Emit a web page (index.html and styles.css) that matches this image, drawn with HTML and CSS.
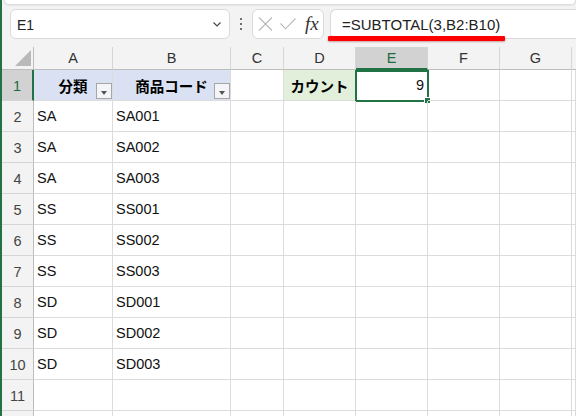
FILE: index.html
```html
<!DOCTYPE html>
<html lang="ja">
<head>
<meta charset="utf-8">
<title>Excel</title>
<link rel="stylesheet" href="styles.css">
</head>
<body>
<div class="app">
  <div class="ribbon"></div>
  <div class="fbar">
    <div class="namebox">
      <span class="ref">E1</span>
      <svg class="chev" width="8" height="5" viewBox="0 0 8 5"><path d="M0.5 0.5 L4 4 L7.5 0.5" fill="none" stroke="#444" stroke-width="1.1"/></svg>
    </div>
    <div class="dots"><i></i><i></i><i></i></div>
    <div class="iconbox">
      <svg width="15" height="14" viewBox="0 0 15 14"><path d="M1 0.5 L14 13.5 M14 0.5 L1 13.5" stroke="#b8b8b8" stroke-width="1.1" fill="none"/></svg>
      <svg width="16" height="12" viewBox="0 0 16 12"><path d="M0.5 5.5 L5.5 10.8 L15.5 0.5" stroke="#b8b8b8" stroke-width="1.1" fill="none"/></svg>
      <span class="fx">fx</span>
    </div>
    <div class="formula">=SUBTOTAL(3,B2:B10)</div>
    <div class="redline"></div>
  </div>
  <div class="sheet">
    <div class="ch corner"><span class="tri"></span></div>
    <div class="ch">A</div>
    <div class="ch">B</div>
    <div class="ch">C</div>
    <div class="ch">D</div>
    <div class="ch sel">E</div>
    <div class="ch">F</div>
    <div class="ch">G</div>
    <div class="ch last"></div>

    <div class="rh rsel">1</div>
    <div class="c blue hd">分類<span class="flt"></span></div>
    <div class="c blue hd">商品コード<span class="flt"></span></div>
    <div class="c"></div>
    <div class="c green hd">カウント</div>
    <div class="c num active">9<span class="selbox"></span><span class="handle"></span></div>
    <div class="c"></div>
    <div class="c"></div>
    <div class="c"></div>

    <div class="rh">2</div><div class="c">SA</div><div class="c">SA001</div><div class="c"></div><div class="c"></div><div class="c"></div><div class="c"></div><div class="c"></div><div class="c"></div>
    <div class="rh">3</div><div class="c">SA</div><div class="c">SA002</div><div class="c"></div><div class="c"></div><div class="c"></div><div class="c"></div><div class="c"></div><div class="c"></div>
    <div class="rh">4</div><div class="c">SA</div><div class="c">SA003</div><div class="c"></div><div class="c"></div><div class="c"></div><div class="c"></div><div class="c"></div><div class="c"></div>
    <div class="rh">5</div><div class="c">SS</div><div class="c">SS001</div><div class="c"></div><div class="c"></div><div class="c"></div><div class="c"></div><div class="c"></div><div class="c"></div>
    <div class="rh">6</div><div class="c">SS</div><div class="c">SS002</div><div class="c"></div><div class="c"></div><div class="c"></div><div class="c"></div><div class="c"></div><div class="c"></div>
    <div class="rh">7</div><div class="c">SS</div><div class="c">SS003</div><div class="c"></div><div class="c"></div><div class="c"></div><div class="c"></div><div class="c"></div><div class="c"></div>
    <div class="rh">8</div><div class="c">SD</div><div class="c">SD001</div><div class="c"></div><div class="c"></div><div class="c"></div><div class="c"></div><div class="c"></div><div class="c"></div>
    <div class="rh">9</div><div class="c">SD</div><div class="c">SD002</div><div class="c"></div><div class="c"></div><div class="c"></div><div class="c"></div><div class="c"></div><div class="c"></div>
    <div class="rh">10</div><div class="c">SD</div><div class="c">SD003</div><div class="c"></div><div class="c"></div><div class="c"></div><div class="c"></div><div class="c"></div><div class="c"></div>
    <div class="rh">11</div><div class="c"></div><div class="c"></div><div class="c"></div><div class="c"></div><div class="c"></div><div class="c"></div><div class="c"></div><div class="c"></div>
    <div class="rh"></div><div class="c"></div><div class="c"></div><div class="c"></div><div class="c"></div><div class="c"></div><div class="c"></div><div class="c"></div><div class="c"></div>
  </div>
</div>
</body>
</html>
```

FILE: styles.css
```css
* { box-sizing: border-box; }
html, body { margin: 0; padding: 0; }
body {
  width: 576px;
  height: 416px;
  overflow: hidden;
  font-family: "Liberation Sans", "Noto Sans CJK JP", sans-serif;
  color: #000;
}
.app {
  width: 576px;
  height: 416px;
  border-left: 2px solid #217346;
  background: #f3f3f3;
  overflow: hidden;
}
.ribbon {
  height: 5px;
  margin-left: 2px;
  background: #fff;
  border: 1px solid #dcdcdc;
  border-top: none;
  border-radius: 0 0 7px 7px;
  box-shadow: 0 1px 2px rgba(0,0,0,0.06);
}
.fbar {
  position: relative;
  display: flex;
  align-items: center;
  height: 30px;
  margin-top: 4px;
  margin-bottom: 8px;
  padding-left: 8px;
}
.namebox {
  width: 220px;
  height: 30px;
  background: #fff;
  border: 1px solid #dadada;
  border-radius: 6px;
  display: flex;
  align-items: center;
  justify-content: space-between;
  padding: 0 8px 0 6px;
  font-size: 14px;
  color: #222;
}
.namebox .ref { padding-top: 1px; }
.dots {
  width: 22px;
  display: flex;
  flex-direction: column;
  align-items: center;
  gap: 2.5px;
}
.dots i {
  display: block;
  width: 2.5px;
  height: 2.5px;
  background: #444;
  border-radius: 50%;
}
.iconbox {
  width: 72px;
  height: 30px;
  background: #fff;
  border: 1px solid #dadada;
  border-radius: 6px;
  display: flex;
  align-items: center;
  padding-left: 5px;
  gap: 7px;
}
.fx {
  font-family: "Liberation Serif", "DejaVu Serif", serif;
  font-style: italic;
  font-size: 19px;
  color: #333;
  margin-left: 2px;
  line-height: 1;
  padding-bottom: 2px;
}
.formula {
  flex: 1;
  margin-left: 6px;
  height: 30px;
  background: #fff;
  border: 1px solid #dadada;
  border-right: none;
  border-radius: 6px 0 0 6px;
  display: flex;
  align-items: center;
  padding-left: 11px;
  font-size: 15px;
  color: #222;
}
.redline {
  position: absolute;
  left: 326px;
  top: 27px;
  width: 177px;
  height: 5px;
  background: #ff0000;
  border-radius: 1px;
  box-shadow: 0 1px 2px rgba(120,0,0,0.35);
}
.sheet {
  display: grid;
  grid-template-columns: 32px 79px 118px 53px 72px 72px 72px 72px 1fr;
  grid-template-rows: 23px repeat(12, 31px);
  background: #fff;
}
.ch {
  background: #f3f3f3;
  border-right: 1px solid #d6d6d6;
  border-bottom: 1px solid #bdbdbd;
  display: flex;
  align-items: center;
  justify-content: center;
  font-size: 14.5px;
  color: #333;
}
.ch.sel {
  background: #d2d2d2;
  color: #1e6b41;
  border-bottom: 2px solid #217346;
  padding-top: 1px;
}
.ch.last { border-right: none; }
.corner {
  align-items: flex-end;
  justify-content: flex-end;
  padding: 0 2px 3px 0;
  border-right-color: #bdbdbd;
}
.tri {
  width: 0;
  height: 0;
  border-left: 16px solid transparent;
  border-bottom: 16px solid #b9b9b9;
}
.rh {
  background: #f3f3f3;
  border-right: 1px solid #bdbdbd;
  border-bottom: 1px solid #d6d6d6;
  display: flex;
  align-items: center;
  justify-content: center;
  font-size: 14.5px;
  color: #444;
  padding-top: 2px;
}
.rh.rsel {
  background: #d2d2d2;
  color: #1e6b41;
  border-right: 2px solid #217346;
}
.c {
  position: relative;
  border-right: 1px solid #dcdcdc;
  border-bottom: 1px solid #dcdcdc;
  display: flex;
  align-items: center;
  padding-left: 3px;
  font-size: 14.5px;
  color: #111;
  white-space: nowrap;
}
.c.hd {
  justify-content: center;
  font-weight: bold;
  padding-left: 0;
  color: #000;
}
.blue { background: #d9e1f2; }
.green { background: #e2efda; }
.num {
  justify-content: flex-end;
  padding-right: 3px;
}
.flt {
  position: absolute;
  right: 0;
  bottom: 1px;
  width: 16px;
  height: 16px;
  background: #f4f5f8;
  border: 1px solid #a6a6a6;
}
.flt::after {
  content: "";
  position: absolute;
  left: 4px;
  top: 7px;
  border-left: 3.5px solid transparent;
  border-right: 3.5px solid transparent;
  border-top: 4px solid #555;
}
.selbox {
  position: absolute;
  left: -1px;
  top: 0;
  right: -2px;
  bottom: -2px;
  border: 2px solid #217346;
  pointer-events: none;
}
.handle {
  position: absolute;
  right: -4px;
  bottom: -4px;
  width: 7px;
  height: 7px;
  background: #217346;
  border: 1px solid #fff;
}
```
